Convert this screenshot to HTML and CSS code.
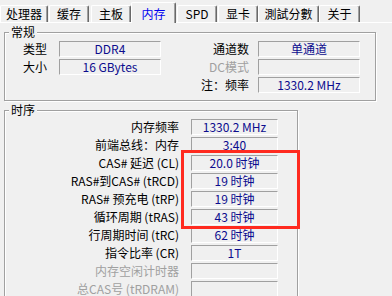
FILE: index.html
```html
<!DOCTYPE html>
<html lang="zh-CN">
  <head>
    <meta charset="UTF-8" />
    <meta name="viewport" content="width=device-width, initial-scale=1.0" />
    <title>CPU-Z 内存</title>
    <link rel="stylesheet" href="styles.css">
  </head>
  <body>
    <div class="tabs">
      <div class="tab">处理器</div>
      <div class="tab">缓存</div>
      <div class="tab">主板</div>
      <div class="tab active">内存</div>
      <div class="tab">SPD</div>
      <div class="tab">显卡</div>
      <div class="tab">測試分數</div>
      <div class="tab">关于</div>
    </div>

    <div class="panel">
      <fieldset class="group general">
        <legend>常规</legend>
        <div class="grid general-grid">
          <span class="lbl">类型</span>
          <span class="field">DDR4</span>
          <span class="lbl">通道数</span>
          <span class="field">单通道</span>

          <span class="lbl">大小</span>
          <span class="field">16 GBytes</span>
          <span class="lbl disabled">DC模式</span>
          <span class="field"></span>

          <span class="lbl"></span>
          <span></span>
          <span class="lbl">注：频率</span>
          <span class="field">1330.2 MHz</span>
        </div>
      </fieldset>

      <fieldset class="group timings">
        <legend>时序</legend>
        <div class="grid timing-grid">
          <span class="lbl">内存频率</span>
          <span class="field">1330.2 MHz</span>
          <span class="lbl">前端总线：内存</span>
          <span class="field">3:40</span>
          <span class="lbl">CAS# 延迟 (CL)</span>
          <span class="field">20.0 时钟</span>
          <span class="lbl">RAS#到CAS# (tRCD)</span>
          <span class="field">19 时钟</span>
          <span class="lbl">RAS# 预充电 (tRP)</span>
          <span class="field">19 时钟</span>
          <span class="lbl">循环周期 (tRAS)</span>
          <span class="field">43 时钟</span>
          <span class="lbl">行周期时间 (tRC)</span>
          <span class="field">62 时钟</span>
          <span class="lbl">指令比率 (CR)</span>
          <span class="field">1T</span>
          <span class="lbl disabled">内存空闲计时器</span>
          <span class="field"></span>
          <span class="lbl disabled">总CAS号 (tRDRAM)</span>
          <span class="field"></span>
        </div>
      </fieldset>
    </div>

    <!-- red marker drawn over the CL / tRCD / tRP / tRAS rows -->
    <div class="highlight"></div>
  </body>
</html>
```

FILE: styles.css
```css
body {
  margin: 0;
  background-color: #f0f0f0;
  font-family: "Noto Sans CJK SC", "Noto Sans CJK TC", sans-serif;
  font-size: 12px;
  color: #000;
  overflow: hidden;
}

/* tab strip */
.tabs {
  display: flex;
  align-items: flex-end;
  height: 22px;
  border-bottom: 1px solid #fff;
}
.tab {
  box-sizing: border-box;
  height: 17px;
  line-height: 16px;
  text-align: center;
  white-space: nowrap;
  border: 1px solid #fff;
  border-bottom: none;
  border-right-color: #696969;
  border-radius: 2px 2px 0 0;
  box-shadow: inset -1px 0 0 #a0a0a0;
}
.tab:nth-child(1) { width: 48px; margin-right: 1px; }
.tab:nth-child(2) { width: 40px; margin-right: 2px; }
.tab:nth-child(3) { width: 40px; }
.tab:nth-child(4) { width: 45px; margin-right: 1px; }
.tab:nth-child(5) { width: 40px; margin-right: 1px; }
.tab:nth-child(6) { width: 40px; }
.tab:nth-child(7) { width: 61px; }
.tab:nth-child(8) { width: 41px; }
.tab.active {
  height: 21px;
  padding-top: 3px;
  margin-bottom: -1px;
  color: #0000f0;
  background-color: #f0f0f0;
}

/* group boxes */
.panel {
  padding: 2px 0 0 4px;
}
.group {
  box-sizing: border-box;
  min-width: 0;
  margin: 0;
  padding: 2px 0 7px 0;
  border: 1px solid #a0a0a0;
  box-shadow: inset 1px 1px 0 #fff, 1px 1px 0 #fff;
}
.group legend {
  margin-left: 4px;
  padding: 0 2px;
  line-height: 14px;
  background-color: #f0f0f0;
}
.general {
  width: 372px;
}
.timings {
  width: 294px;
  margin-top: 2px;
}

.grid {
  display: grid;
  row-gap: 2px;
  margin-left: 5px;
}
.general-grid {
  grid-template-columns: 49px 102px 97px 102px;
}
.timing-grid {
  grid-template-columns: 181px 87px;
}

.lbl {
  line-height: 16px;
  text-align: right;
  padding-right: 12px;
  white-space: nowrap;
}
.general-grid .lbl:nth-child(4n+3) {
  padding-right: 9px;
}
.lbl.disabled {
  color: #a0a0a0;
}

.field {
  box-sizing: border-box;
  height: 16px;
  line-height: 14px;
  text-align: center;
  white-space: nowrap;
  color: #0c0c8e;
  border: 1px solid;
  border-color: #a0a0a0 #fff #fff #a0a0a0;
}

.highlight {
  position: absolute;
  left: 181px;
  top: 150px;
  width: 119px;
  height: 79px;
  box-sizing: border-box;
  border: 3px solid #ff2a1f;
}
```
